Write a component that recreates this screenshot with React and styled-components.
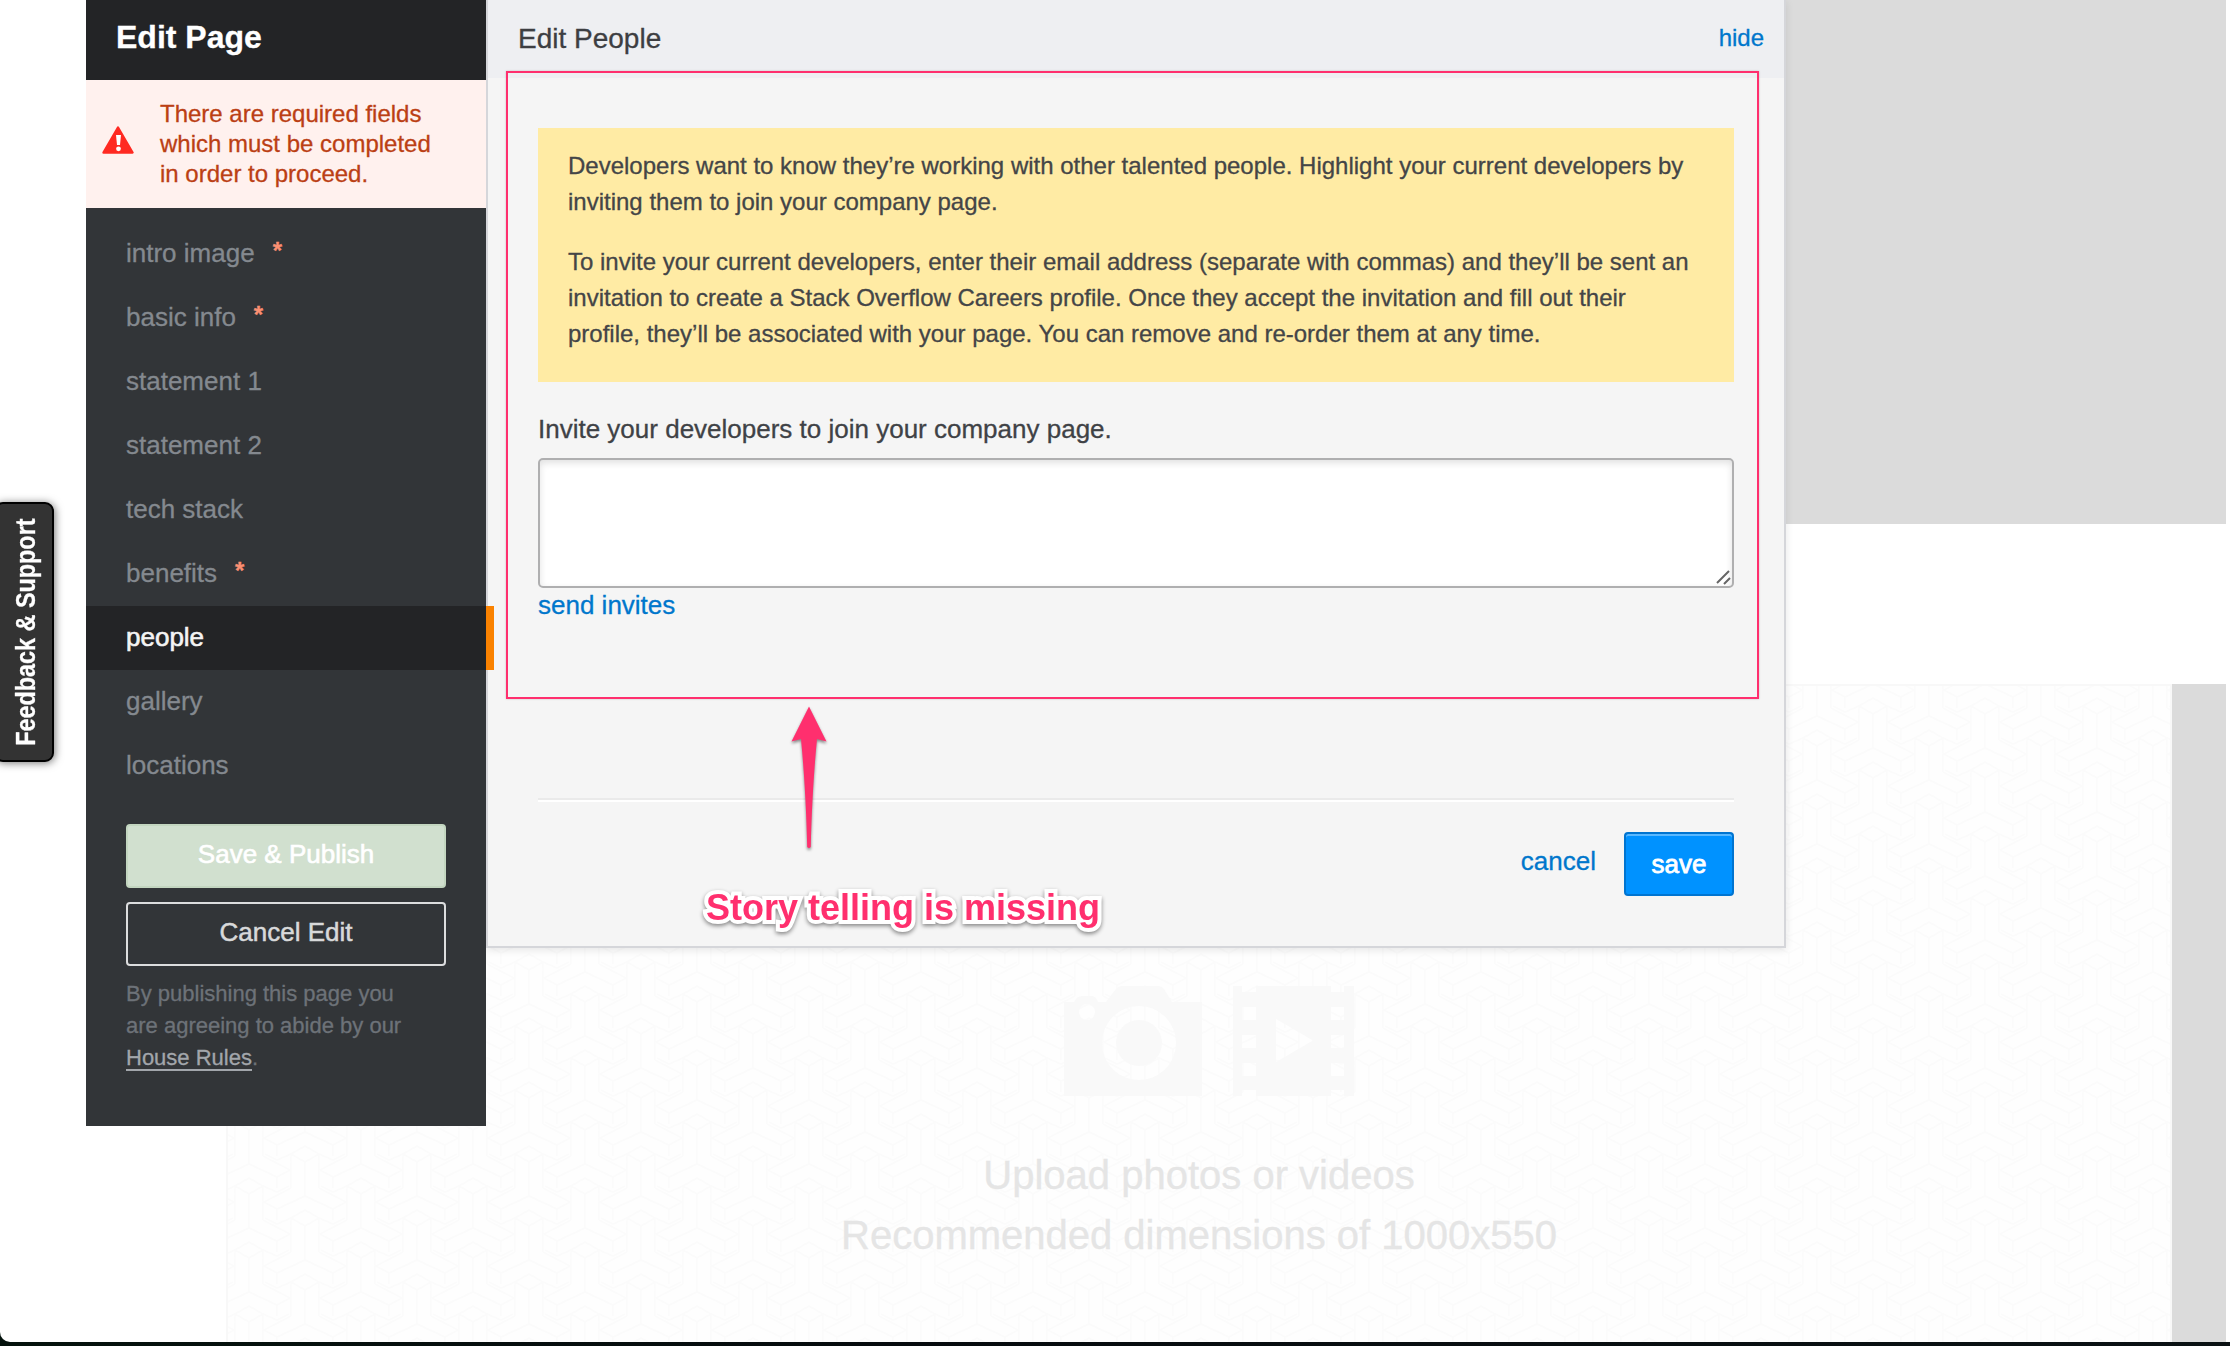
import React from "react";
import styled, { createGlobalStyle, css } from "styled-components";

const GlobalStyle = createGlobalStyle`
  *, *::before, *::after { box-sizing: border-box; }
  body {
    margin: 0;
    background: #050b0c;
    overflow: hidden;
    font-family: "Liberation Sans", Arial, Helvetica, sans-serif;
    -webkit-text-stroke: 0.3px currentColor;
  }
  p, h1, h2, ul { margin: 0; padding: 0; font-weight: inherit; }
  ul { list-style: none; }
`;

const Desktop = styled.div`
  width: 2230px;
  height: 1346px;
  background: linear-gradient(90deg, #04120c 0, #060b0e 900px, #0a1113 2230px);
`;

const Window = styled.div`
  position: relative;
  height: 1342px;
  overflow: hidden;
  background: #fff;
  border-bottom-left-radius: 10px;
`;

/* Company page behind the editor */

const CompanyPage = styled.main`
  display: flex;
  flex-direction: column;
  gap: 160px;
  height: 100%;
  padding: 0 4px 0 226px;
`;

const Banner = styled.div`
  flex: none;
  height: 524px;
  background: #dbdbdb;
`;

const GalleryRow = styled.section`
  flex: 1;
  display: flex;
  background: #dbdbdb;
  padding-right: 54px;
`;

const UploadBox = styled.div`
  position: relative;
  flex: 1;
  display: flex;
  flex-direction: column;
  align-items: center;
  padding-top: 300px;
  background: #fefefe;
  border: 2px solid #f8f8f8;
  border-bottom: 0;
`;

const PatternFill = styled.svg`
  position: absolute;
  inset: 0;
  width: 100%;
  height: 100%;
`;

const UploadIcons = styled.div`
  position: relative;
  display: flex;
  gap: 31px;
  height: 110px;
  margin-left: 20px;
`;

const UploadText = styled.div`
  position: relative;
  margin-top: 49px;
  font-size: 40px;
  line-height: 60px;
  text-align: center;
  color: #e5e5e5;
`;

/* Editor */

const Editor = styled.div`
  position: absolute;
  top: 0;
  left: 86px;
  display: flex;
  align-items: flex-start;
`;

const Sidebar = styled.nav`
  width: 400px;
  height: 1126px;
  background: #323538;
  position: relative;
  z-index: 1;
`;

const SidebarTitle = styled.h1`
  height: 80px;
  padding: 18px 30px 0;
  font-size: 32px;
  line-height: 38px;
  font-weight: 700;
  color: #fff;
  background: #232426;
`;

const Warning = styled.div`
  display: flex;
  align-items: center;
  gap: 26px;
  height: 128px;
  padding: 0 16px;
  font-size: 24px;
  line-height: 30px;
  color: #bb3f14;
  background: #fff1ee;

  svg { flex: none; margin-top: -8px; }
`;

const Menu = styled.ul`
  padding-top: 14px;
`;

const MenuItem = styled.li`
  display: flex;
  height: 64px;
  padding-left: 40px;
  font-size: 26px;
  line-height: 62px;
  color: #84898f;
  ${(p) =>
    p.$active &&
    css`
      width: 408px;
      color: #f4f4f4;
      background: #232426;
      border-right: 8px solid #fa8200;
      -webkit-text-stroke: 0.6px #f4f4f4;
    `}
`;

const Star = styled.span`
  margin-left: 18px;
  font-size: 24px;
  line-height: 58px;
  font-weight: 700;
  color: #fa8f72;
`;

const SidebarActions = styled.div`
  display: flex;
  flex-direction: column;
  gap: 14px;
  padding: 26px 40px 0;
`;

const SidebarButton = styled.button`
  height: 64px;
  padding: 0 0 3px;
  font: 26px "Liberation Sans", Arial, sans-serif;
  border-radius: 4px;
  ${(p) =>
    p.$primary
      ? css`
          color: #fff;
          background: #d1e0cf;
          border: 2px solid #c3d6c0;
          -webkit-text-stroke: 0.6px #fff;
        `
      : css`
          color: #d8d9da;
          background: transparent;
          border: 2px solid #dcddde;
          -webkit-text-stroke: 0.5px #d8d9da;
        `}
`;

const Legal = styled.p`
  padding: 12px 40px 0;
  font-size: 22px;
  line-height: 32px;
  color: #6d7278;
`;

const RulesLink = styled.a`
  color: #a2a6ab;
  border-bottom: 2px solid #a2a6ab;
  display: inline-block;
  line-height: 23px;
`;

const Panel = styled.section`
  width: 1300px;
  height: 948px;
  background: #f5f5f5;
  border: 2px solid #d5d6da;
  border-top: 0;
  box-shadow: 0 2px 8px rgba(0, 0, 0, 0.1);
`;

const PanelHeader = styled.header`
  display: flex;
  justify-content: space-between;
  height: 78px;
  padding: 0 20px 0 30px;
  background: #eeeff2;
`;

const PanelTitle = styled.h2`
  font-size: 28px;
  line-height: 78px;
  color: #3d3e42;
`;

const Link = styled.a`
  font-size: ${(p) => p.$size || 26}px;
  line-height: ${(p) => p.$line || 30}px;
  color: #0077cc;
`;

const PanelBody = styled.div`
  display: flex;
  flex-direction: column;
  align-items: stretch;
  padding: 50px 50px 0;
`;

const Notice = styled.div`
  display: flex;
  flex-direction: column;
  gap: 24px;
  height: 254px;
  padding: 20px 30px 0;
  font-size: 24px;
  line-height: 36px;
  color: #444547;
  background: #ffeba4;
  white-space: nowrap;
`;

const FieldLabel = styled.label`
  margin-top: 32px;
  font-size: 26px;
  line-height: 30px;
  color: #3f4246;
`;

const Field = styled.div`
  position: relative;
  height: 130px;
  margin: 14px 0 2px;

  svg { position: absolute; right: 2px; bottom: 2px; }
`;

const InviteInput = styled.textarea`
  display: block;
  width: 100%;
  height: 100%;
  border: 2px solid #afafb0;
  border-radius: 5px;
  background: #fff;
  box-shadow: inset 0 3px 7px rgba(0, 0, 0, 0.12);
  resize: none;
  outline: none;
`;

const PanelFooter = styled.footer`
  display: flex;
  justify-content: flex-end;
  gap: 28px;
  margin-top: 178px;
  padding-top: 32px;
  border-top: 2px solid #eaeaea;
  box-shadow: inset 0 2px 0 #fff;
`;

const SaveButton = styled.button`
  width: 110px;
  height: 64px;
  padding: 1px 0 0;
  font: 26px "Liberation Sans", Arial, sans-serif;
  color: #fff;
  background: #0092ff;
  border: 2px solid #0074d0;
  border-radius: 4px;
  box-shadow: inset 0 2px 0 #59b8ff;
  -webkit-text-stroke: 0.8px #fff;
`;

/* Floating items */

const FeedbackTab = styled.aside`
  position: absolute;
  top: 502px;
  left: -6px;
  display: flex;
  align-items: center;
  justify-content: center;
  width: 60px;
  height: 260px;
  padding-left: 3px;
  background: #333;
  border: 2px solid #000;
  border-radius: 9px;
  box-shadow: 1px 1px 8px rgba(0, 0, 0, 0.55);
`;

const FeedbackText = styled.span`
  writing-mode: vertical-rl;
  transform: rotate(180deg) scaleY(0.835);
  font-size: 28px;
  line-height: 32px;
  font-weight: 700;
  color: #fff;
  white-space: nowrap;
`;

const Highlight = styled.div`
  position: absolute;
  top: 71px;
  left: 506px;
  width: 1253px;
  height: 628px;
  border: 2px solid #ff2f6e;
  box-shadow: 0 0 2px rgba(0, 0, 0, 0.2);
  pointer-events: none;
`;

const Arrow = styled.svg`
  position: absolute;
  top: 700px;
  left: 784px;
  filter: drop-shadow(0 2px 1.5px rgba(0, 0, 0, 0.45));
`;

const Remark = styled.div`
  position: absolute;
  top: 887px;
  left: 706px;
  font-size: 36px;
  line-height: 41px;
  font-weight: 700;
  white-space: nowrap;
  color: #ff2f6e;
  -webkit-text-stroke: 8px #fff;
  paint-order: stroke fill;
  stroke-linejoin: round;
  filter: drop-shadow(0 2px 2px rgba(0, 0, 0, 0.45));
`;

const menu = [
  { label: "intro image", required: true },
  { label: "basic info", required: true },
  { label: "statement 1" },
  { label: "statement 2" },
  { label: "tech stack" },
  { label: "benefits", required: true },
  { label: "people", active: true },
  { label: "gallery" },
  { label: "locations" },
];

function Tripod({ x, y }) {
  return (
    <g transform={`translate(${x} ${y})`}>
      <path d="M-14 0L0-8L14 0L0 8ZM-14 0V34M14 0V34M0 8V42" />
      <path d="M14 34L41 48L28 55L0 42L-28 55L-41 48L-14 34" />
      <path d="M28 55V66M-28 55V66M14 0L28 6L40 0M-14 0L-28 6L-40 0" />
    </g>
  );
}

function WeavePattern() {
  return (
    <PatternFill>
      <defs>
        <pattern id="weave" x="77" y="20" width="112" height="64" patternUnits="userSpaceOnUse">
          <g fill="none" stroke="#fbfbfb" strokeWidth="1.6">
            {[-64, 0, 64].map((dy) =>
              [0, 112].map((dx) => <Tripod key={`a${dx}${dy}`} x={dx} y={dy} />)
            )}
            {[-96, -32, 32].map((dy) => (
              <Tripod key={`b${dy}`} x={56} y={dy} />
            ))}
          </g>
        </pattern>
      </defs>
      <rect width="100%" height="100%" fill="url(#weave)" />
    </PatternFill>
  );
}

function CameraIcon() {
  return (
    <svg width="138" height="110" viewBox="0 0 138 110">
      <path
        fill="#f9f9f9"
        fillRule="evenodd"
        d="M0 16H10Q13 10 18 10H28Q32 10 34 16H42L52 3Q54 0 58 0H94Q98 0 100 3L108 16H138V110H0ZM23 18A8 8 0 1 0 23 34A8 8 0 1 0 23 18ZM75 20A37 37 0 1 0 75 94A37 37 0 1 0 75 20ZM75 34A23 23 0 1 1 75 80A23 23 0 1 1 75 34Z"
      />
    </svg>
  );
}

function FilmIcon() {
  return (
    <svg width="121" height="110" viewBox="0 0 121 110">
      <path
        fill="#f9f9f9"
        fillRule="evenodd"
        d="M0 0H9V6H23V0H98V6H111V0H121V110H111V104H98V110H23V104H9V110H0ZM9 21V34H23V21ZM98 21V34H111V21ZM9 49V62H23V49ZM98 49V62H111V49ZM9 77V90H23V77ZM98 77V90H111V77ZM43 33V76L80 54.5Z"
      />
    </svg>
  );
}

function WarningIcon() {
  return (
    <svg width="32" height="28" viewBox="0 0 32 28">
      <path
        d="M16 1.5L30.5 26.5H1.5Z"
        fill="#ff2a22"
        stroke="#ff2a22"
        strokeWidth="2.4"
        strokeLinejoin="round"
      />
      <path d="M14 9H19L18 19H15Z" fill="#fff" />
      <circle cx="16.5" cy="22.8" r="2.4" fill="#fff" />
    </svg>
  );
}

export default function App() {
  return (
    <Desktop>
      <GlobalStyle />
      <Window>
        <CompanyPage>
          <Banner />
          <GalleryRow>
            <UploadBox>
              <WeavePattern />
              <UploadIcons>
                <CameraIcon />
                <FilmIcon />
              </UploadIcons>
              <UploadText>
                <p>Upload photos or videos</p>
                <p>Recommended dimensions of 1000x550</p>
              </UploadText>
            </UploadBox>
          </GalleryRow>
        </CompanyPage>

        <Editor>
          <Sidebar>
            <SidebarTitle>Edit Page</SidebarTitle>
            <Warning>
              <WarningIcon />
              <p>
                There are required fields
                <br />
                which must be completed
                <br />
                in order to proceed.
              </p>
            </Warning>
            <Menu>
              {menu.map((item) => (
                <MenuItem key={item.label} $active={item.active}>
                  {item.label}
                  {item.required && <Star>*</Star>}
                </MenuItem>
              ))}
            </Menu>
            <SidebarActions>
              <SidebarButton $primary>Save &amp; Publish</SidebarButton>
              <SidebarButton>Cancel Edit</SidebarButton>
            </SidebarActions>
            <Legal>
              By publishing this page you
              <br />
              are agreeing to abide by our
              <br />
              <RulesLink>House Rules</RulesLink>.
            </Legal>
          </Sidebar>

          <Panel>
            <PanelHeader>
              <PanelTitle>Edit People</PanelTitle>
              <Link $size={24} $line={75}>hide</Link>
            </PanelHeader>
            <PanelBody>
              <Notice>
                <p>
                  Developers want to know they’re working with other talented people. Highlight your current developers by
                  <br />
                  inviting them to join your company page.
                </p>
                <p>
                  To invite your current developers, enter their email address (separate with commas) and they’ll be sent an
                  <br />
                  invitation to create a Stack Overflow Careers profile. Once they accept the invitation and fill out their
                  <br />
                  profile, they’ll be associated with your page. You can remove and re-order them at any time.
                </p>
              </Notice>
              <FieldLabel>Invite your developers to join your company page.</FieldLabel>
              <Field>
                <InviteInput />
                <svg width="18" height="18" viewBox="0 0 18 18">
                  <path d="M3 15L15 3M10 16L16 10" stroke="#666" strokeWidth="2" />
                </svg>
              </Field>
              <Link>send invites</Link>
              <PanelFooter>
                <Link $line={58}>cancel</Link>
                <SaveButton>save</SaveButton>
              </PanelFooter>
            </PanelBody>
          </Panel>
        </Editor>

        <FeedbackTab>
          <FeedbackText>Feedback &amp; Support</FeedbackText>
        </FeedbackTab>

        <Highlight />
        <Arrow width="50" height="156" viewBox="0 0 50 156">
          <path
            d="M25 6.5L42.5 41.5L33 39C30 70 27.5 110 26.8 147Q25 149 23.2 147C22.5 110 20 70 17 39L7.5 41.5Z"
            fill="#ff2f6e"
          />
        </Arrow>
        <Remark>Story telling is missing</Remark>
      </Window>
    </Desktop>
  );
}
